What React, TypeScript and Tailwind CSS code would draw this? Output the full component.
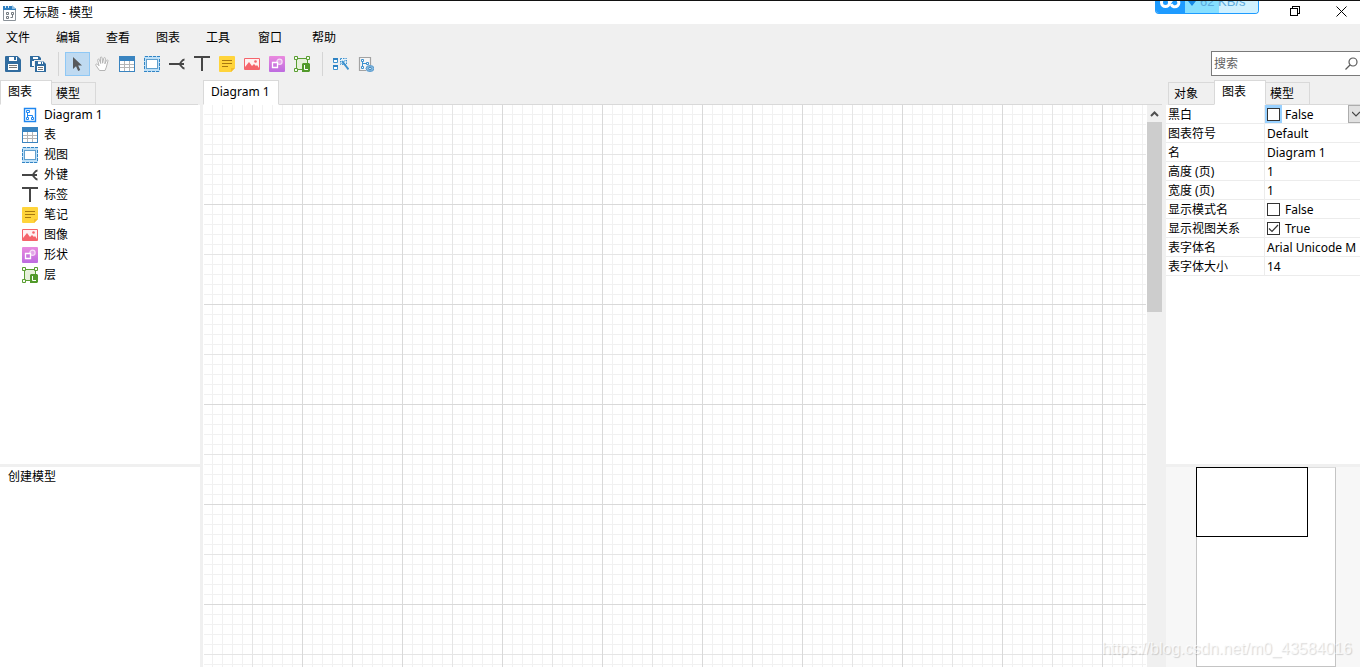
import React from "react";
import clsx from "clsx";

type IconProps = { children: React.ReactNode; crisp?: boolean };

const Icon = ({ children, crisp = true }: IconProps) => (
  <svg
    width="16"
    height="16"
    viewBox="0 0 16 16"
    fill="none"
    shapeRendering={crisp ? "crispEdges" : "auto"}
    className="block shrink-0"
    aria-hidden="true"
  >
    {children}
  </svg>
);

const AppIcon = () => (
  <Icon crisp={false}>
    <path d="M.5 3.500h12v12H.5z" fill="#fff" stroke="#8b9299" />
    <path d="M0 1h9l4 3v1H0z" fill="#2f7fc0" />
    <path d="M9 0l4 4H9z" fill="#8dbfe3" />
    <path d="M2.500 1v2M5.500 1v2" stroke="#d6e9f7" />
    <path d="M3.500 7.500h2v2h-2zM8.500 7.500h2v2h-2zM3.500 11.500h2v2h-2zM9.500 9.500v3h-2" stroke="#747a80" />
  </Icon>
);

const SaveIcon = () => (
  <Icon crisp={false}>
    <path d="M1 0h11.500L16 3.500V15a1 1 0 0 1-1 1H1a1 1 0 0 1-1-1V1a1 1 0 0 1 1-1z" fill="#316c9f" />
    <path d="M4 1h8v4H4zM3 8h10v6H3z" fill="#fff" />
    <path d="M9 1h2v3H9z" fill="#316c9f" />
    <path d="M4 9.500h8M4 11.500h8" stroke="#777" />
  </Icon>
);

const SaveAllIcon = () => (
  <Icon crisp={false}>
    <path d="M0 0h9l2 2v9H0z" fill="#316c9f" />
    <path d="M3 1h5v2H3zM2 5h4v5H2z" fill="#fff" />
    <path d="M4 4h9l3 3v9H4z" fill="#f0f0f0" />
    <path d="M5 5h8l3 3v8H5z" fill="#316c9f" />
    <path d="M8 5.500h5V8H8zM7 10h7v5H7z" fill="#fff" />
    <path d="M11 6h1v2h-1z" fill="#316c9f" />
    <path d="M8 11.500h5M8 13.500h5" stroke="#777" />
  </Icon>
);

const PointerIcon = () => (
  <Icon crisp={false}>
    <path d="M4 1v12l3-2.700L9.200 15l2-1L9.200 9.500H13z" fill="#58595b" />
  </Icon>
);

const HandIcon = () => (
  <Icon crisp={false}>
    <path
      d="M5.500 14.500 2 9.500c-.9-1.300.6-2 1.500-1.200L5 9.800 3.700 4.300c-.3-1.300 1.300-1.700 1.700-.5L6.700 7.500 6.300 2c0-1.400 1.700-1.400 1.800 0l.5 5.200L9.700 2.300c.3-1.200 1.800-.9 1.700.4l-.5 5.100 1.500-3.300c.5-1.100 1.900-.6 1.500.6l-1.600 6.100-1.300 3.300z"
      fill="#fff"
      stroke="#b5b5b5"
    />
  </Icon>
);

const TableIcon = () => (
  <Icon>
    <path d="M0 0h16v16H0z" fill="#3a84c0" />
    <path d="M1 5h14v10H1z" fill="#fff" />
    <path d="M5.500 5v10M10.500 5v10M1 8.500h14M1 11.500h14" stroke="#b5b5b5" />
  </Icon>
);

const ViewIcon = () => (
  <Icon>
    <path d="M0 0h16v16H0z" fill="#bfe0f7" />
    <path d="M.5.5h15v15H.5z" stroke="#3184c4" strokeDasharray="3 1.300" />
    <path d="M2.500 3.500h11v9h-11z" fill="#fff" stroke="#5f9fce" />
  </Icon>
);

const ForeignKeyIcon = () => (
  <Icon crisp={false}>
    <path d="M0 8h15" stroke="#464646" strokeWidth="2" />
    <path d="M15.500 3.500c-2.500 0-3 2.500-5 4.500 2 2 2.500 4.500 5 4.500" stroke="#464646" strokeWidth="1.800" />
  </Icon>
);

const LabelIcon = () => (
  <Icon>
    <path d="M0 0h16v2H9v13H7V2H0z" fill="#464646" />
  </Icon>
);

const NoteIcon = () => (
  <Icon crisp={false}>
    <path d="M1 0h14a1 1 0 0 1 1 1v11l-4 4H1a1 1 0 0 1-1-1V1a1 1 0 0 1 1-1z" fill="#ffd43b" />
    <path d="M16 12h-4v4z" fill="#f4bd2b" />
    <path d="M3 4.500h10M3 7.500h10M3 10.500h6" stroke="#a87810" />
  </Icon>
);

const ImageIcon = () => (
  <Icon crisp={false}>
    <path d="M.5 2.500h15v11H.5z" fill="#fff1f1" stroke="#f5646b" />
    <path d="M1 11l4-5 3 4 2-2 2 2 1-1 2 3v2H1z" fill="#f5646b" />
    <circle cx="11.500" cy="5.500" r="1.300" fill="#f5646b" />
  </Icon>
);

const ShapeIcon = () => (
  <Icon crisp={false}>
    <defs>
      <linearGradient id="shapeFill" x1="0" y1="0" x2="0" y2="1">
        <stop offset="0" stopColor="#ea8ade" />
        <stop offset="1" stopColor="#bd6be0" />
      </linearGradient>
    </defs>
    <rect width="16" height="16" rx="1" fill="url(#shapeFill)" />
    <circle cx="10.500" cy="5.800" r="2.600" fill="#e3a5e8" stroke="#f6def7" strokeWidth="1.200" />
    <path d="M3.500 6.500h5v5h-5z" fill="#cb76df" stroke="#fff" strokeWidth="1.300" />
  </Icon>
);

const LayerIcon = () => (
  <Icon crisp={false}>
    <path d="M2.500 2.500h11v11h-11z" fill="#e6f1da" stroke="#5a9e32" />
    <path d="M.5.5h3v3h-3zM12.500.5h3v3h-3zM.5 12.500h3v3h-3z" fill="#f7fbf2" stroke="#5a9e32" />
    <path d="M9 7h6l1 1v7l-1 1H8V8z" fill="#529a2b" />
    <path d="M10.500 9v4.500H14" stroke="#fff" />
  </Icon>
);

const AutoLayoutIcon = () => (
  <Icon crisp={false}>
    <path d="M.5 2.500h4v4h-4zM.5 9.500h4v4h-4z" fill="#fff" stroke="#3c91cf" />
    <path d="M0 2h5v2H0zM0 9h5v2H0z" fill="#2f83c4" />
    <path d="M7.500 2.500h6v6h-6z" fill="#e2f1fa" stroke="#3c91cf" strokeDasharray="1.500 1" />
    <path d="M9 5l6.500 8.500" stroke="#3c91cf" strokeWidth="2" />
    <path d="M12.500 4L8.500 8" stroke="#3c91cf" />
  </Icon>
);

const ModelViewIcon = () => (
  <Icon crisp={false}>
    <path d="M8 14.500H1.500v-13h11V9" fill="#f6f6f6" stroke="#a3a3a3" strokeWidth="1.200" />
    <path d="M3.500 3.500h2v2h-2zM3.500 10.500h2v2h-2zM8.500 6.500h2v2h-2z" fill="#fff" stroke="#3c91cf" />
    <path d="M4.500 6v4M5 7.500h3" stroke="#3c91cf" />
    <ellipse cx="12" cy="12.500" rx="4" ry="3" fill="#85b9df" stroke="#5b9bce" />
    <circle cx="12" cy="12.500" r="1.300" fill="#e5f2fb" stroke="#3c85bd" />
  </Icon>
);

const DiagramIcon = () => (
  <Icon crisp={false}>
    <path d="M2.500 1.500h11v13h-11z" stroke="#1f86f0" strokeWidth="1.400" />
    <path d="M4.500 3.500h3v2h-3zM4.500 10.500h2v2h-2zM9.500 10.500h2v2h-2z" stroke="#1f86f0" />
    <path d="M5.500 6v4M5.500 8.500h5V10" stroke="#1f86f0" />
  </Icon>
);

const tools = [
  { name: "表", icon: <TableIcon /> },
  { name: "视图", icon: <ViewIcon /> },
  { name: "外键", icon: <ForeignKeyIcon /> },
  { name: "标签", icon: <LabelIcon /> },
  { name: "笔记", icon: <NoteIcon /> },
  { name: "图像", icon: <ImageIcon /> },
  { name: "形状", icon: <ShapeIcon /> },
  { name: "层", icon: <LayerIcon /> },
];

const menus = ["文件", "编辑", "查看", "图表", "工具", "窗口", "帮助"];

type Property = { label: string; value: string | boolean; selected?: boolean };

const properties: Property[] = [
  { label: "黑白", value: false, selected: true },
  { label: "图表符号", value: "Default" },
  { label: "名", value: "Diagram 1" },
  { label: "高度 (页)", value: "1" },
  { label: "宽度 (页)", value: "1" },
  { label: "显示模式名", value: false },
  { label: "显示视图关系", value: true },
  { label: "表字体名", value: "Arial Unicode M" },
  { label: "表字体大小", value: "14" },
];

const TitleBar = () => (
  <header className="relative flex h-6 items-center justify-between border-t border-[#121212] bg-white">
    <div className="flex items-center gap-1 pl-[3px]">
      <AppIcon />
      <h1>无标题 - 模型</h1>
    </div>
    <div className="flex h-5 items-center self-start">
      <button aria-label="Restore" className="grid w-[46px] place-items-center pr-2">
        <svg width="10" height="10" viewBox="0 0 10 10" fill="none" stroke="#000" shapeRendering="crispEdges">
          <path d="M.5 2.500h7v7h-7zM2.500 2.500v-2h7v7h-2" />
        </svg>
      </button>
      <button aria-label="Close" className="grid w-[38px] place-items-center">
        <svg width="11" height="11" viewBox="0 0 11 11" fill="none" stroke="#000">
          <path d="M.5.5l10 10M10.500.5l-10 10" />
        </svg>
      </button>
    </div>
    <SpeedWidget />
  </header>
);

// floating download monitor, half hidden behind the top edge
const SpeedWidget = () => (
  <div className="absolute top-0 right-[101px] flex h-[13px] w-[104px] items-end overflow-hidden rounded-b border border-t-0 border-[#1e9bff] bg-[#d0f1ff]">
    <div className="flex h-full w-[29px] items-end justify-center bg-[#1e9bff]">
      <svg width="21" height="12" viewBox="0 0 21 12" fill="none" stroke="#fff" strokeWidth="3">
        <circle cx="5.500" cy="1.500" r="4" />
        <path d="M9 2c3-1 3-6 6-6M11 3a4 4 0 1 0 5-5" />
      </svg>
    </div>
    <div className="relative h-full flex-1 bg-[linear-gradient(to_right,#86dfff_34px,#d0f1ff_34px)]">
      <span className="absolute bottom-[3px] left-[3px] flex items-center gap-1 font-['Liberation_Sans',sans-serif] text-[13px] leading-4 whitespace-nowrap text-[#5ba9dc]">
        <svg width="8" height="8" viewBox="0 0 8 8" fill="#1688e6">
          <path d="M0 3h8L4 8zM2 0h4v3H2z" />
        </svg>
        62 KB/s
      </span>
    </div>
  </div>
);

const MenuBar = () => (
  <nav className="grid h-7 grid-cols-[repeat(4,50px)_52px_54px_auto] items-center justify-start pl-[6px]">
    {menus.map((menu) => (
      <button key={menu} className="text-left">
        {menu}
      </button>
    ))}
  </nav>
);

type ToolButtonProps = { label: string; active?: boolean; children: React.ReactNode };

const ToolButton = ({ label, active, children }: ToolButtonProps) => (
  <button
    aria-label={label}
    className={clsx(
      "flex h-6 w-[25px] items-center border pl-[3px]",
      active ? "border-[#8fc8f5] bg-[#bfdaf1]" : "border-transparent"
    )}
  >
    {children}
  </button>
);

const Separator = () => <div className="mr-[6px] ml-[7px] h-6 w-px bg-[#d5d5d5]" />;

const Toolbar = () => (
  <div className="flex h-7 items-start justify-between">
    <div className="flex pl-px">
      <ToolButton label="保存"><SaveIcon /></ToolButton>
      <ToolButton label="全部保存"><SaveAllIcon /></ToolButton>
      <Separator />
      <ToolButton label="选择" active><PointerIcon /></ToolButton>
      <ToolButton label="移动"><HandIcon /></ToolButton>
      {tools.map((tool) => (
        <ToolButton key={tool.name} label={tool.name}>{tool.icon}</ToolButton>
      ))}
      <Separator />
      <ToolButton label="自动调整版面"><AutoLayoutIcon /></ToolButton>
      <ToolButton label="显示模型"><ModelViewIcon /></ToolButton>
    </div>
    <label className="-mt-px flex h-[25px] w-[149px] items-center border border-r-0 border-[#7a7a7a] bg-white px-[2px]">
      <input
        type="text"
        placeholder="搜索"
        aria-label="搜索"
        className="min-w-0 flex-1 outline-none placeholder:text-[#5f5f5f]"
      />
      <svg width="13" height="13" viewBox="0 0 13 13" fill="none" stroke="#5a5a5a" strokeWidth="1.200">
        <circle cx="8" cy="5" r="4" />
        <path d="M5 8L.5 12.500" />
      </svg>
    </label>
  </div>
);

type TabProps = { label: string; active?: boolean; fit?: boolean };

const Tab = ({ label, active, fit }: TabProps) => (
  <button
    role="tab"
    aria-selected={!!active}
    className={clsx(
      "shrink-0 border border-[#d9d9d9] text-left",
      active
        ? "h-[25px] border-b-white bg-white pl-[7px] pb-[2px]"
        : "h-[23px] w-11 bg-[#f0f0f0] pl-1 not-first:border-l-0 first:w-[46px] first:border-r-0 first:pl-[5px]",
      active && (fit ? "pr-2" : "w-[52px]")
    )}
  >
    {label}
  </button>
);

const Tabs = ({ children, className }: { children: React.ReactNode; className?: string }) => (
  <div role="tablist" className={clsx("flex h-[25px] items-end", className)}>
    {children}
    <div className="h-px flex-1 bg-[#d9d9d9]" />
  </div>
);

const LeftPanel = () => (
  <aside className="flex w-[200px] shrink-0 flex-col">
    <Tabs className="pr-[2px]">
      <Tab label="图表" active />
      <Tab label="模型" />
    </Tabs>
    <ul className="min-h-0 flex-1 overflow-hidden bg-white">
      <li className="flex h-5 items-center gap-[6px] pl-[22px]">
        <DiagramIcon />
        Diagram 1
      </li>
      {tools.map((tool) => (
        <li key={tool.name} className="flex h-5 items-center gap-[6px] pl-[22px]">
          {tool.icon}
          {tool.name}
        </li>
      ))}
    </ul>
    <section className="mt-[3px] h-[200px] bg-white px-2 py-[2px]">创建模型</section>
  </aside>
);

const Canvas = () => (
  <main className="flex min-w-0 flex-1 flex-col">
    <Tabs>
      <Tab label="Diagram 1" active fit />
    </Tabs>
    <div className="flex min-h-0 flex-1">
      <div className="min-w-0 flex-1 bg-white px-px">
        <svg width="100%" height="100%" className="block" shapeRendering="crispEdges" aria-hidden="true">
          <defs>
            <pattern id="minor" x="8" y="9" width="10" height="10" patternUnits="userSpaceOnUse">
              <path d="M0 0h10v1H1v9H0z" fill="#f1f1f1" />
            </pattern>
            <pattern id="middle" x="48" y="49" width="50" height="50" patternUnits="userSpaceOnUse">
              <path d="M0 0h50v1H1v49H0z" fill="#e5e5e5" />
            </pattern>
            <pattern id="major" x="98" y="99" width="100" height="100" patternUnits="userSpaceOnUse">
              <path d="M0 0h100v1H1v99H0z" fill="#d9d9d9" />
            </pattern>
          </defs>
          <rect width="100%" height="100%" fill="url(#minor)" />
          <rect width="100%" height="100%" fill="url(#middle)" />
          <rect width="100%" height="100%" fill="url(#major)" />
        </svg>
      </div>
      <div className="flex w-[15px] flex-col bg-[#f0f0f0]">
        <button aria-label="Scroll up" className="grid h-[17px] place-items-center">
          <svg width="9" height="6" viewBox="0 0 9 6" fill="none" stroke="#505050" strokeWidth="2">
            <path d="M1 5l3.500-3.500L8 5" />
          </svg>
        </button>
        <div className="h-[190px] bg-[#cdcdcd]" />
      </div>
    </div>
  </main>
);

const PropertyCheck = ({ id, checked, selected }: { id: string; checked: boolean; selected?: boolean }) => (
  <div className="flex h-[18px] items-center">
    <span className={clsx("grid h-[18px] w-[17px] place-items-center", selected && "bg-[#99d1ff]")}>
      <input
        id={id}
        type="checkbox"
        defaultChecked={checked}
        className="peer col-start-1 row-start-1 size-[13px] appearance-none border border-[#333] bg-white"
      />
      <svg
        width="11"
        height="11"
        viewBox="0 0 11 11"
        fill="none"
        stroke="#333"
        strokeWidth="1.200"
        className="pointer-events-none invisible col-start-1 row-start-1 peer-checked:visible"
      >
        <path d="M1 5.500l3 3L10 2" />
      </svg>
    </span>
    <label htmlFor={id} className="flex-1 pt-[2px] pl-[3px] leading-4">
      {checked ? "True" : "False"}
    </label>
    {selected && (
      <button aria-label="展开" className="h-[18px] w-3 border border-r-0 border-[#adadad] bg-[#e1e1e1] pl-[3px]">
        <svg width="8" height="6" viewBox="0 0 8 6" fill="none" stroke="#444" strokeWidth="1.200">
          <path d="M0 1l4 4 4-4" />
        </svg>
      </button>
    )}
  </div>
);

const RightPanel = () => (
  <aside className="ml-1 flex w-[194px] shrink-0 flex-col overflow-hidden">
    <Tabs className="pl-[2px]">
      <Tab label="对象" />
      <Tab label="图表" active />
      <Tab label="模型" />
    </Tabs>
    <div className="min-h-0 flex-1 overflow-hidden bg-white">
      <table className="w-full table-fixed border-separate border-spacing-0">
        <tbody>
          {properties.map(({ label, value, selected }) => (
            <tr key={label}>
              <th
                scope="row"
                className="h-[19px] w-[99px] border-r border-b border-[#ececec] p-0 pt-[2px] pl-[2px] text-left leading-4 font-normal whitespace-nowrap"
              >
                {typeof value === "boolean" ? <label htmlFor={label}>{label}</label> : label}
              </th>
              <td className="h-[19px] overflow-hidden border-b border-[#ececec] p-0 leading-4 whitespace-nowrap">
                {typeof value === "boolean" ? (
                  <PropertyCheck id={label} checked={value} selected={selected} />
                ) : (
                  <div className="pt-[2px] pl-[2px]">{value}</div>
                )}
              </td>
            </tr>
          ))}
        </tbody>
      </table>
    </div>
    <section aria-label="Overview" className="mt-[3px] h-[200px] bg-[#f7f7f7] pl-[30px]">
      <div className="h-full w-[140px] border border-[#c4c4c4] border-t-[#dcdcdc] bg-white">
        <div className="-mt-px -ml-px h-[70px] w-28 border border-black" />
      </div>
    </section>
  </aside>
);

export default function App() {
  return (
    <div className="relative flex h-screen flex-col overflow-hidden bg-[#f0f0f0] font-['Noto_Sans','Noto_Sans_CJK_SC',sans-serif] text-xs text-black">
      <TitleBar />
      <MenuBar />
      <Toolbar />
      <div className="flex min-h-0 flex-1">
        <LeftPanel />
        <div className="w-[3px] shrink-0" />
        <Canvas />
        <RightPanel />
      </div>
      <p className="pointer-events-none absolute right-2 bottom-[6px] font-['Liberation_Sans',sans-serif] text-base text-white/70 [text-shadow:1px_1px_1px_rgba(0,0,0,0.16)]">
        https://blog.csdn.net/m0_43584016
      </p>
    </div>
  );
}
